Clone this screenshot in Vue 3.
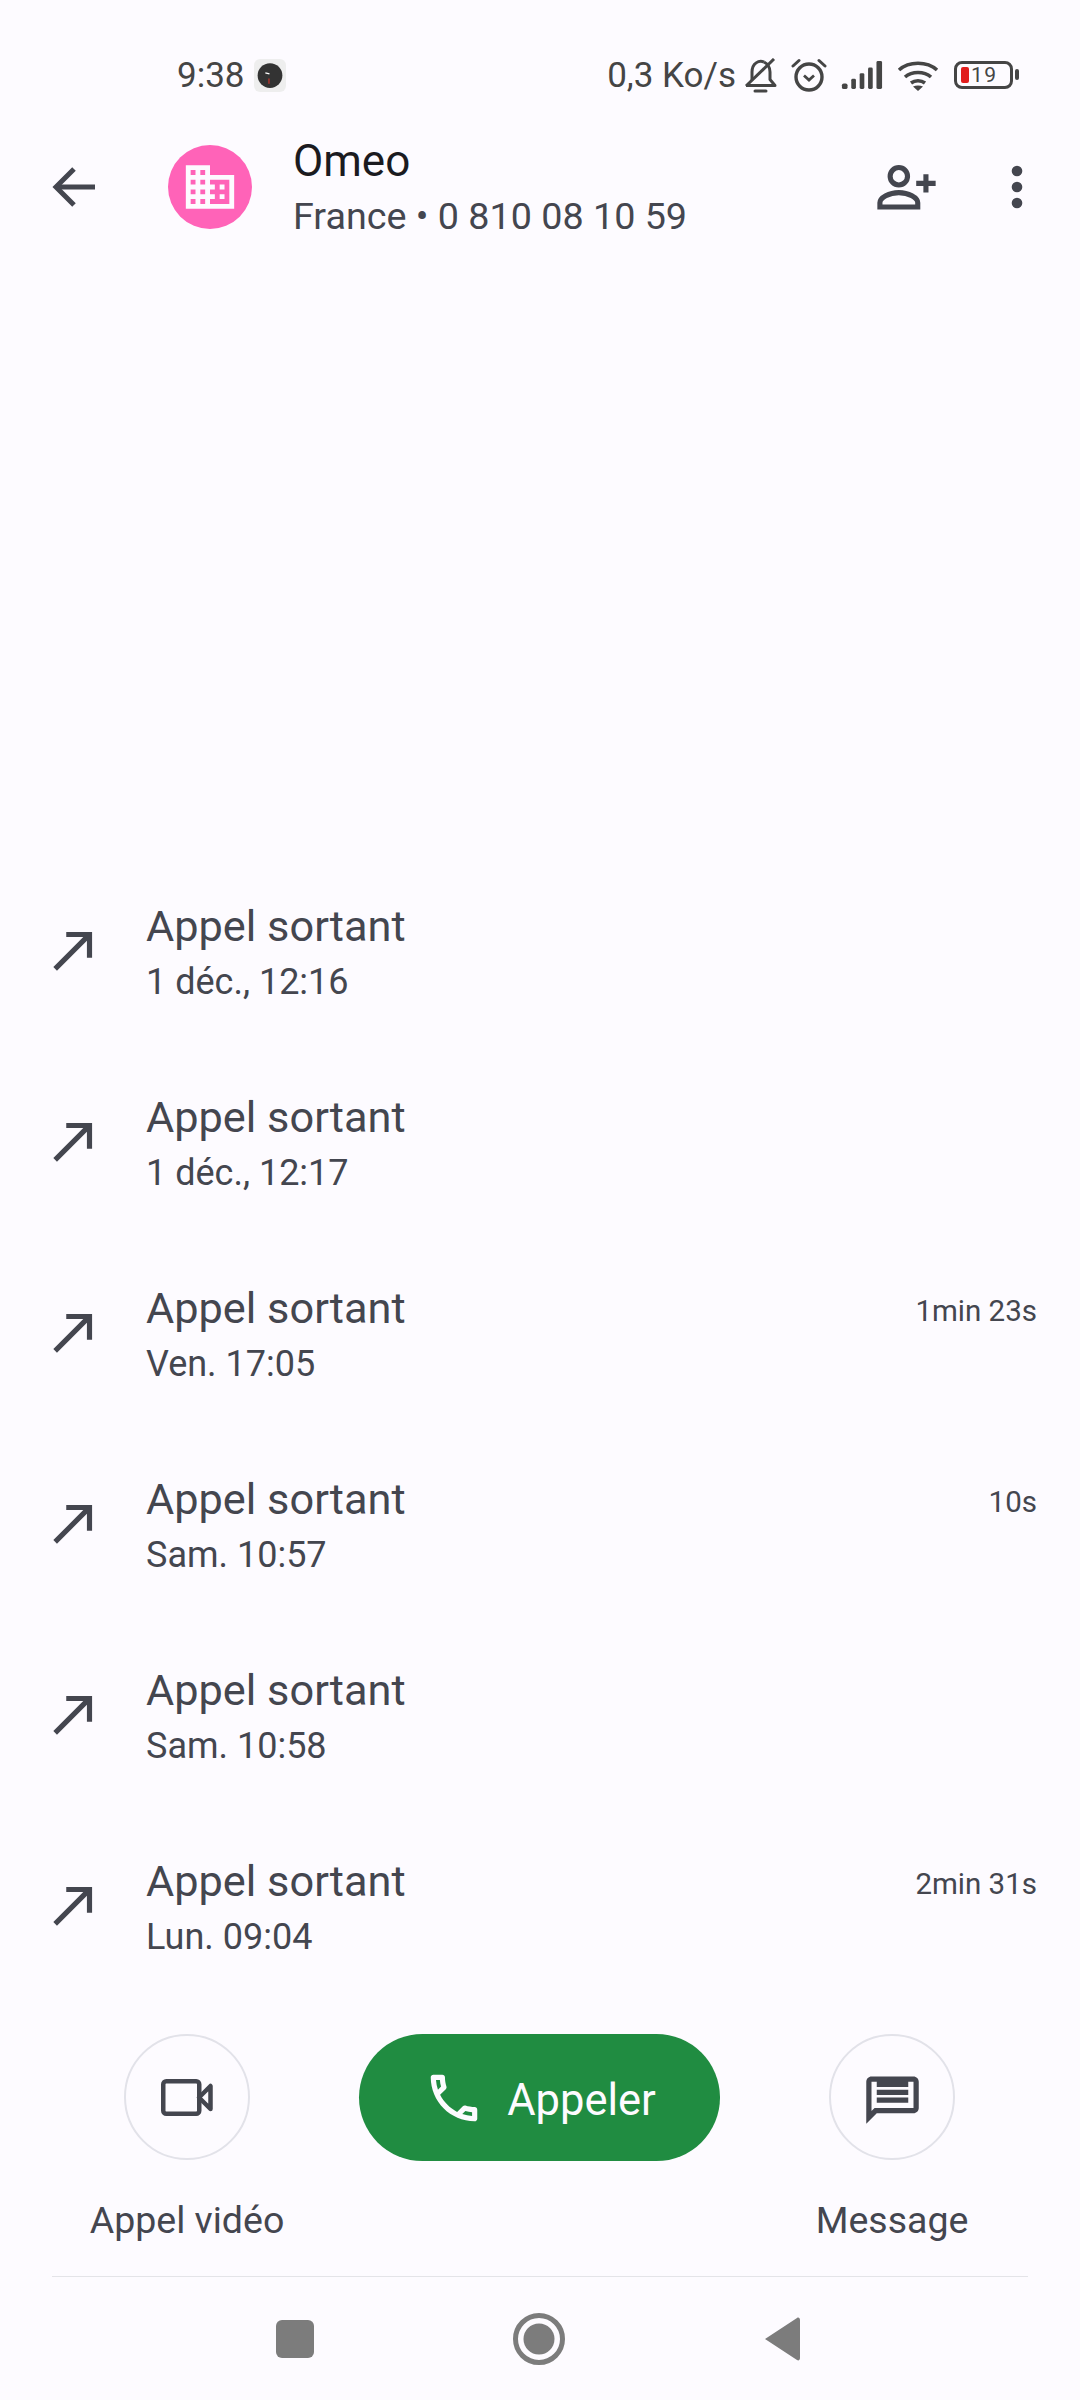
<script setup>
const calls = [
  { when: '1 déc., 12:16', length: '' },
  { when: '1 déc., 12:17', length: '' },
  { when: 'Ven. 17:05', length: '1min 23s' },
  { when: 'Sam. 10:57', length: '10s' },
  { when: 'Sam. 10:58', length: '' },
  { when: 'Lun. 09:04', length: '2min 31s' },
]
</script>

<template>
  <div class="screen">
    <div class="status">
      <span class="time">9:38</span>
      <svg class="clock" width="32" height="33" viewBox="0 0 31 32">
        <rect width="31" height="32" rx="6" fill="#eeeeee" />
        <circle cx="15.5" cy="16" r="12" fill="#333333" />
        <path d="M11 13.5l4 1" stroke="#fff" stroke-width="1.2" />
        <path d="M14.5 19v5" stroke="#e0352b" stroke-width="1" />
      </svg>
      <div class="status-right">
        <span class="speed">0,3 Ko/s</span>
        <svg class="s-bell" width="33" height="35" viewBox="0 0 33 35" fill="none" stroke="#454545" stroke-width="3">
          <path d="M2 27.500h29l-5-6V14c0-5-2-8-6-10" stroke-linejoin="round" />
          <path d="M20 4c-5-2-12 1-12 10v8" />
          <path d="M2 28L30 1" />
          <path d="M11 33h11" stroke-linecap="round" />
        </svg>
        <svg class="s-alarm" width="36" height="34" viewBox="0 0 36 34" fill="none" stroke="#454545">
          <circle cx="18" cy="19" r="13" stroke-width="3.400" />
          <path d="M13 17.500l5 4.500 5-4.500" stroke-width="2.800" />
          <path d="M2 8L8 2.500M34 8L28 2.500" stroke-width="3" stroke-linecap="round" />
        </svg>
        <svg class="s-signal" width="44" height="28" viewBox="0 0 43 30" fill="#454545">
          <rect x="0" y="24" width="6" height="6" rx="2" />
          <rect x="10" y="19" width="5" height="11" rx="1.500" />
          <rect x="19" y="13" width="5" height="17" rx="1.500" />
          <rect x="28" y="7" width="5" height="23" rx="1.500" />
          <rect x="37" y="0" width="6" height="30" rx="1.500" />
        </svg>
        <svg class="s-wifi" width="42" height="32" viewBox="0 0 42 32" fill="none" stroke="#454545" stroke-width="3.600">
          <path d="M2 11C12 2 30 2 40 11" />
          <path d="M8 18c7-6 19-6 26 0" />
          <path d="M14 24c4-3 10-3 14 0" />
          <path d="M21 32l-5-4.500c3-1.500 7-1.500 10 0z" fill="#454545" stroke="none" />
        </svg>
        <div class="battery">
          <span class="charge"></span>
          <span class="level">19</span>
          <span class="tip"></span>
        </div>
      </div>
    </div>

    <header class="header">
      <svg class="back" width="43" height="42" viewBox="0 0 43 42" fill="none" stroke="#44464f" stroke-width="5">
        <path d="M43 21H4" />
        <path d="M22 3L4 21l18 18" />
      </svg>
      <div class="avatar">
        <svg width="58" height="58" viewBox="0 0 24 24" fill="#fdfbff">
          <path d="M12 7V3H2v18h20V7H12zM6 19H4v-2h2v2zm0-4H4v-2h2v2zm0-4H4V9h2v2zm0-4H4V5h2v2zm4 12H8v-2h2v2zm0-4H8v-2h2v2zm0-4H8V9h2v2zm0-4H8V5h2v2zm10 12h-8v-2h2v-2h-2v-2h2v-2h-2V9h8v10zm-2-8h-2v2h2v-2zm0 4h-2v2h2v-2z" />
        </svg>
      </div>
      <div class="who">
        <div class="name">Omeo</div>
        <div class="number">France • 0 810 08 10 59</div>
      </div>
      <svg class="add" width="59" height="45" viewBox="0 0 57 44" fill="none" stroke="#44464f" stroke-width="5">
        <circle cx="21" cy="11" r="8.500" />
        <path d="M2.500 41v-4c0-5 9-10 18.500-10s18.500 5 18.500 10v4z" />
        <path d="M38 18h19M47.500 9v18" />
      </svg>
      <svg class="more" width="12" height="44" viewBox="0 0 12 44" fill="#44464f">
        <circle cx="6" cy="6" r="5.300" />
        <circle cx="6" cy="22" r="5.300" />
        <circle cx="6" cy="38" r="5.300" />
      </svg>
    </header>

    <div class="spacer"></div>

    <ul class="calls">
      <li v-for="(call, i) in calls" :key="i" class="call">
        <svg class="made" width="62" height="62" viewBox="0 0 24 24" fill="#44464f">
          <path d="M9 5v2h6.590L4 18.590 5.410 20 17 8.410V15h2V5z" />
        </svg>
        <div class="call-text">
          <div class="call-title">Appel sortant</div>
          <div class="call-when">{{ call.when }}</div>
        </div>
        <span v-if="call.length" class="call-length">{{ call.length }}</span>
      </li>
    </ul>

    <div class="actions">
      <div class="action">
        <div class="round">
          <svg width="52" height="37" viewBox="0 0 52 37" fill="none" stroke="#44464f" stroke-width="4.500" stroke-linejoin="round">
            <rect x="2.250" y="2.250" width="36" height="32.500" rx="3" />
            <path d="M38 18.500L49.500 7v23z" />
          </svg>
        </div>
        <span class="action-label">Appel vidéo</span>
      </div>
      <button class="dial" type="button">
        <svg width="62" height="62" viewBox="0 0 24 24" fill="#fdfbff">
          <path d="M6.540 5c.06.89.21 1.760.45 2.590l-1.200 1.200c-.41-1.200-.67-2.470-.76-3.790h1.510m9.860 12.020c.85.24 1.720.39 2.600.45v1.490c-1.320-.09-2.590-.35-3.800-.75l1.200-1.190M7.500 3H4c-.55 0-1 .45-1 1 0 9.390 7.610 17 17 17 .55 0 1-.45 1-1v-3.490c0-.55-.45-1-1-1-1.240 0-2.450-.2-3.570-.57-.1-.04-.21-.05-.31-.05-.26 0-.51.1-.71.29l-2.200 2.200c-2.830-1.450-5.150-3.760-6.590-6.590l2.200-2.200c.28-.28.36-.67.25-1.020C8.700 6.450 8.500 5.250 8.500 4c0-.55-.45-1-1-1z" />
        </svg>
        <span class="dial-label">Appeler</span>
      </button>
      <div class="action">
        <div class="round">
          <svg width="63" height="63" viewBox="0 0 24 24" fill="#44464f">
            <path d="M20 4H4c-1.100 0-1.990.9-1.990 2L2 22l4-4h14c1.100 0 2-.9 2-2V6c0-1.100-.9-2-2-2zm0 12H5.170L4 17.170V6h16v10zM6 12h12v2H6zm0-3h12v2H6zm0-3h12v2H6z" />
          </svg>
        </div>
        <span class="action-label">Message</span>
      </div>
    </div>

    <div class="divider"></div>

    <nav class="nav">
      <span class="nav-square"></span>
      <svg width="54" height="54" viewBox="0 0 54 54">
        <circle cx="27" cy="27" r="23.500" fill="none" stroke="#7c7c7c" stroke-width="5" />
        <circle cx="27" cy="27" r="15.500" fill="#7c7c7c" />
      </svg>
      <svg width="36" height="44" viewBox="0 0 36 44" fill="#7c7c7c">
        <path d="M1 22L33 1c1.500-1 3 0 3 2v38c0 2-1.500 3-3 2z" />
      </svg>
    </nav>
  </div>
</template>

<style scoped>
.screen {
  width: 1080px;
  height: 2400px;
  display: flex;
  flex-direction: column;
  background: #fdfbff;
  color: #44464f;
  font-family: Roboto, "Noto Sans", sans-serif;
  overflow: hidden;
}

.status {
  height: 50px;
  margin-top: 50px;
  margin-bottom: 26px;
  padding: 0 67px 0 177px;
  display: flex;
  align-items: center;
  color: #454545;
  font-size: 35px;
}

.clock {
  margin-left: 9px;
}

.status-right {
  margin-left: auto;
  display: flex;
  align-items: center;
}

.s-bell {
  margin-left: 8px;
}

.s-alarm {
  margin-left: 14px;
}

.s-signal {
  margin-left: 13px;
}

.s-wifi {
  margin-left: 13px;
}

.battery {
  position: relative;
  width: 59px;
  height: 28px;
  margin-left: 15px;
  border: 3px solid #454545;
  border-radius: 8px;
  box-sizing: border-box;
}

.charge {
  position: absolute;
  left: 4px;
  top: 3px;
  width: 8px;
  height: 16px;
  background: #e11d1d;
  border-radius: 2px;
}

.level {
  position: absolute;
  left: 14px;
  top: -2px;
  font-size: 21px;
  line-height: 26px;
  letter-spacing: 1.5px;
}

.tip {
  position: absolute;
  right: -9px;
  top: 5px;
  width: 4px;
  height: 11px;
  background: #454545;
  border-radius: 2px;
}

.header {
  height: 122px;
  padding-left: 52px;
  display: flex;
  align-items: center;
}

.avatar {
  width: 84px;
  height: 84px;
  margin-left: 73px;
  border-radius: 50%;
  background: #ff63b8;
  display: flex;
  align-items: center;
  justify-content: center;
}

.who {
  margin: 3px 0 0 41px;
  flex: 1;
}

.name {
  font-size: 44px;
  line-height: 54px;
  color: #1b1b1f;
}

.number {
  font-size: 37.7px;
  line-height: 56px;
}

.more {
  margin: 0 57px 0 75px;
}

.spacer {
  flex: 1;
}

.calls {
  list-style: none;
  margin: 0;
  padding: 0;
}

.call {
  height: 191px;
  padding: 0 43px;
  display: flex;
  align-items: center;
}

.made {
  margin-right: 41px;
  margin-top: -5px;
}

.call-text {
  flex: 1;
  padding-top: 3px;
}

.call-title {
  font-size: 43.3px;
  line-height: 56px;
}

.call-when {
  font-size: 36px;
  line-height: 54px;
}

.call-length {
  align-self: flex-start;
  margin-top: 52px;
  font-size: 29.5px;
  line-height: 40px;
}

.actions {
  padding: 31px 38px 32px 37px;
  display: flex;
  align-items: flex-start;
  justify-content: space-between;
}

.action {
  width: 300px;
  display: flex;
  flex-direction: column;
  align-items: center;
}

.round {
  width: 126px;
  height: 126px;
  box-sizing: border-box;
  border: 2px solid #e2e2e9;
  border-radius: 50%;
  display: flex;
  align-items: center;
  justify-content: center;
}

.action-label {
  margin-top: 36px;
  font-size: 37.5px;
  line-height: 48px;
}

.dial {
  width: 361px;
  height: 127px;
  padding: 0;
  border: 0;
  border-radius: 64px;
  background: #208c41;
  color: #fdfbff;
  font: inherit;
  display: flex;
  align-items: center;
  justify-content: center;
  gap: 22px;
}

.dial-label {
  padding-top: 5px;
  font-size: 43.5px;
}

.divider {
  height: 1px;
  margin: 0 52px;
  background: #e4e4e8;
}

.nav {
  height: 123px;
  padding: 0 280px 0 276px;
  display: flex;
  align-items: center;
  justify-content: space-between;
}

.nav-square {
  width: 38px;
  height: 38px;
  border-radius: 6px;
  background: #7c7c7c;
}
</style>
